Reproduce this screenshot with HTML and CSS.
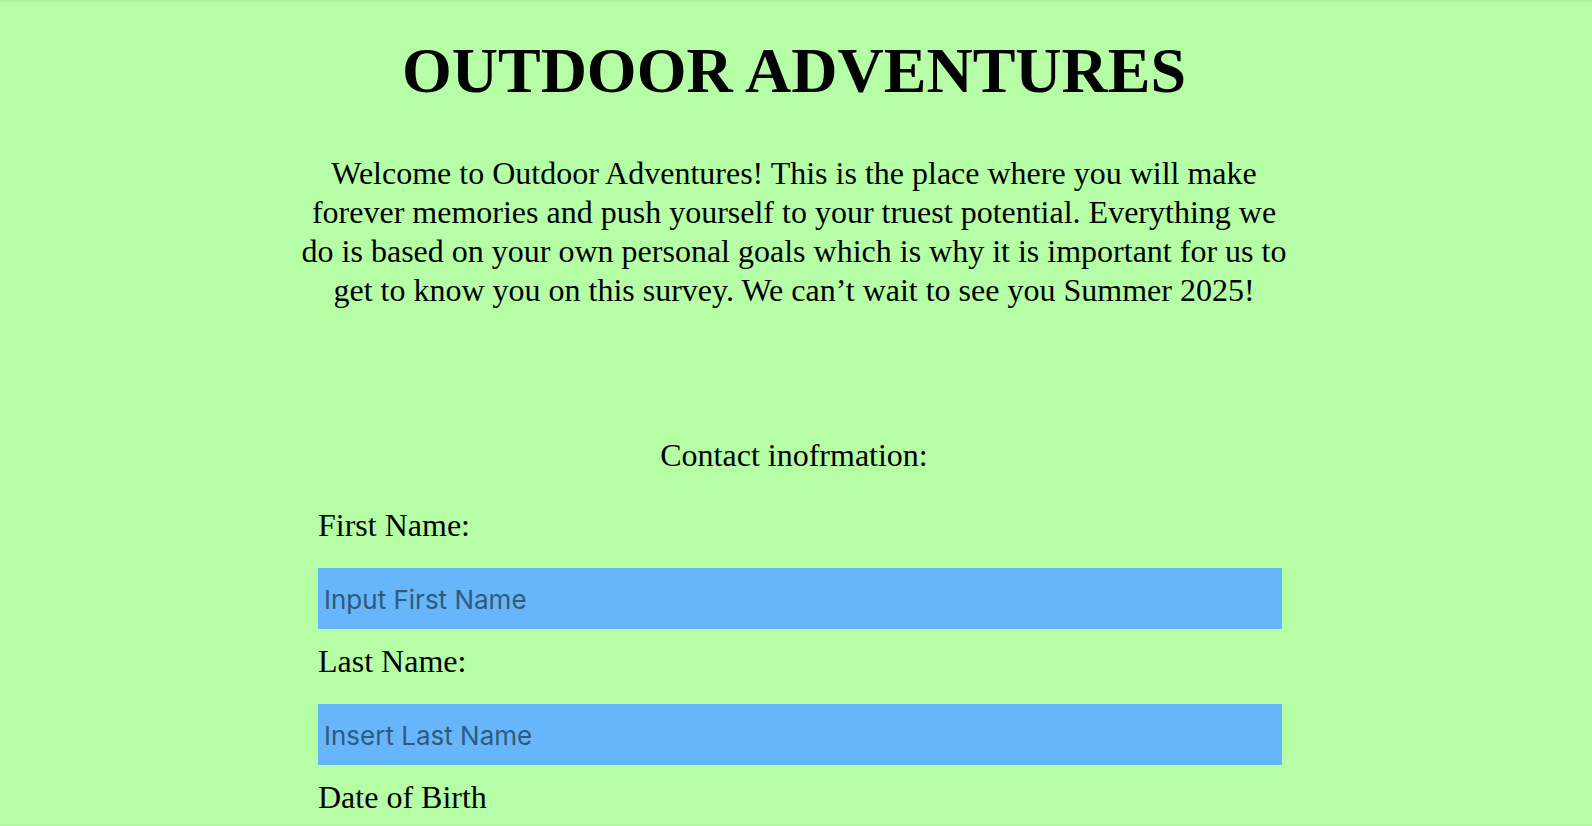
FILE: index.html
```html
<!DOCTYPE html>
<html lang="en">
<head>
<meta charset="utf-8">
<title>Outdoor Adventures</title>
<link rel="stylesheet" href="styles.css">
</head>
<body>
<main class="page">
  <h1 class="title">OUTDOOR ADVENTURES</h1>
  <p class="intro">Welcome to Outdoor Adventures! This is the place where you will make forever memories and push yourself to your truest potential. Everything we do is based on your own personal goals which is why it is important for us to get to know you on this survey. We can’t wait to see you Summer 2025!</p>
  <form class="survey">
    <p class="section">Contact inofrmation:</p>
    <div class="fields">
      <label class="label" for="first-name">First Name:</label>
      <input class="field" id="first-name" type="text" placeholder="Input First Name">
      <label class="label" for="last-name">Last Name:</label>
      <input class="field" id="last-name" type="text" placeholder="Insert Last Name">
      <p class="label">Date of Birth</p>
    </div>
  </form>
</main>
</body>
</html>
```

FILE: styles.css
```css
* {
  box-sizing: border-box;
}

body {
  margin: 0;
  padding-top: 2px;
  background: linear-gradient(#abee9d, #b6fea6 3px, #b6fea6 calc(100% - 3px), #b0f5a1) fixed;
  color: #000;
  font: 32px/38px "Liberation Serif", "Times New Roman", serif;
}

.page {
  max-width: 1000px;
  margin: 0 auto;
  padding-right: 4px;
}

.title {
  margin: 32px 0 0;
  font-size: 64px;
  line-height: 74px;
  text-align: center;
}

.intro {
  margin: 46px 0 0;
  line-height: 39px;
  text-align: center;
}

.section {
  margin: 126px 0 0;
  text-align: center;
}

.fields {
  margin: 32px 10px 0 22px;
}

.label,
.field {
  display: block;
}

.label {
  margin: 0 0 24px;
}

.field {
  width: 100%;
  height: 61px;
  margin: 0 0 13px;
  padding: 3px 6px 1px;
  border: 0;
  background: #67b6fb;
  font: 26px Inter, sans-serif;
}

.field::placeholder {
  color: #305a7b;
  opacity: 1;
}
```
